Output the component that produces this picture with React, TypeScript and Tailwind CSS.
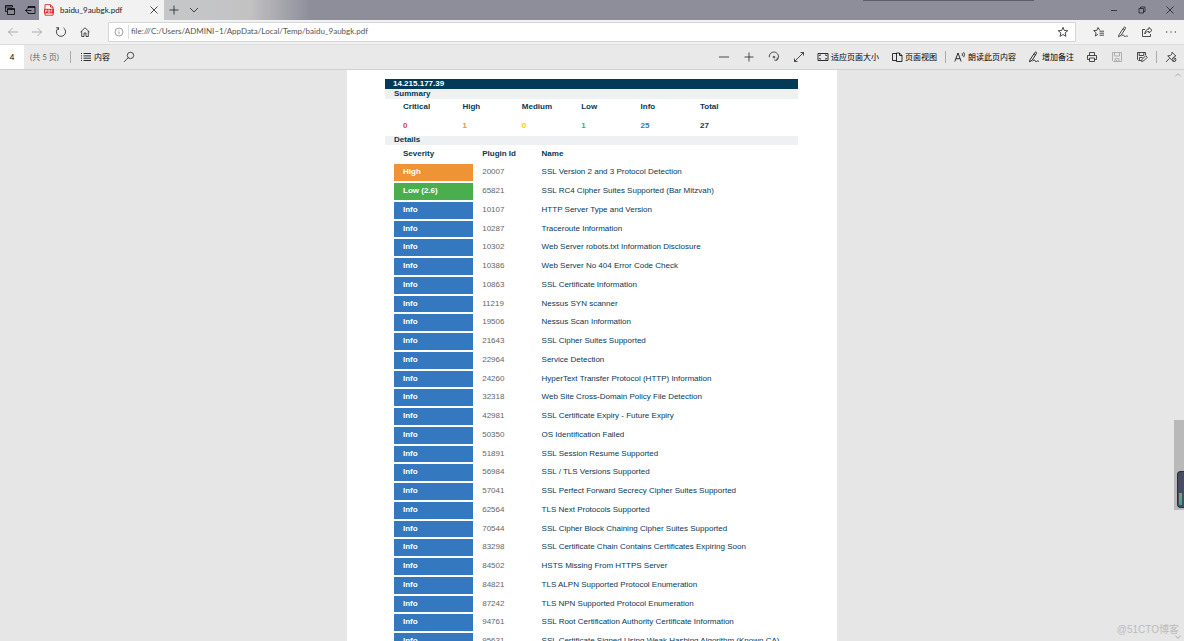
import React from "react";

type Severity = "High" | "Low (2.6)" | "Info";

interface Finding {
  severity: Severity;
  id: string;
  name: string;
}

const severityColors: Record<Severity, string> = {
  High: "bg-[#ee9336]",
  "Low (2.6)": "bg-[#4bae4e]",
  Info: "bg-[#3479bf]",
};

const summary = [
  { label: "Critical", value: 0, color: "text-[#d43f3a]" },
  { label: "High", value: 1, color: "text-[#ee9336]" },
  { label: "Medium", value: 0, color: "text-[#fdc431]" },
  { label: "Low", value: 1, color: "text-[#4bae4e]" },
  { label: "Info", value: 25, color: "text-[#3479bf]" },
  { label: "Total", value: 27, color: "text-[#053958]" },
];

const findings: Finding[] = [
  { severity: "High", id: "20007", name: "SSL Version 2 and 3 Protocol Detection" },
  { severity: "Low (2.6)", id: "65821", name: "SSL RC4 Cipher Suites Supported (Bar Mitzvah)" },
  { severity: "Info", id: "10107", name: "HTTP Server Type and Version" },
  { severity: "Info", id: "10287", name: "Traceroute Information" },
  { severity: "Info", id: "10302", name: "Web Server robots.txt Information Disclosure" },
  { severity: "Info", id: "10386", name: "Web Server No 404 Error Code Check" },
  { severity: "Info", id: "10863", name: "SSL Certificate Information" },
  { severity: "Info", id: "11219", name: "Nessus SYN scanner" },
  { severity: "Info", id: "19506", name: "Nessus Scan Information" },
  { severity: "Info", id: "21643", name: "SSL Cipher Suites Supported" },
  { severity: "Info", id: "22964", name: "Service Detection" },
  { severity: "Info", id: "24260", name: "HyperText Transfer Protocol (HTTP) Information" },
  { severity: "Info", id: "32318", name: "Web Site Cross-Domain Policy File Detection" },
  { severity: "Info", id: "42981", name: "SSL Certificate Expiry - Future Expiry" },
  { severity: "Info", id: "50350", name: "OS Identification Failed" },
  { severity: "Info", id: "51891", name: "SSL Session Resume Supported" },
  { severity: "Info", id: "56984", name: "SSL / TLS Versions Supported" },
  { severity: "Info", id: "57041", name: "SSL Perfect Forward Secrecy Cipher Suites Supported" },
  { severity: "Info", id: "62564", name: "TLS Next Protocols Supported" },
  { severity: "Info", id: "70544", name: "SSL Cipher Block Chaining Cipher Suites Supported" },
  { severity: "Info", id: "83298", name: "SSL Certificate Chain Contains Certificates Expiring Soon" },
  { severity: "Info", id: "84502", name: "HSTS Missing From HTTPS Server" },
  { severity: "Info", id: "84821", name: "TLS ALPN Supported Protocol Enumeration" },
  { severity: "Info", id: "87242", name: "TLS NPN Supported Protocol Enumeration" },
  { severity: "Info", id: "94761", name: "SSL Root Certification Authority Certificate Information" },
  { severity: "Info", id: "95631", name: "SSL Certificate Signed Using Weak Hashing Algorithm (Known CA)" },
];

// All icons are drawn on a 12 x 12 grid
const icons = {
  tabs: (
    <>
      <path d="M3 7.500H1.500v-6h7v1.500M1.500 3h7" />
      <path d="M3.500 4.500h7v6h-7zM3.500 5.500h7" />
    </>
  ),
  setAside: (
    <>
      <path d="M4 4.500V2.500h7v7H4V8M4 3.500h7" />
      <path d="M7.500 6.500h-6M3.500 4.500l-2 2 2 2" />
    </>
  ),
  close: <path d="M2.500 2.500l7 7M9.500 2.500l-7 7" />,
  plus: <path d="M6 1.500v9M1.500 6h9" />,
  minus: <path d="M1 6h10" />,
  chevronDown: <path d="M2 4l4 4 4-4" />,
  chevronUp: <path d="M2 8l4-4 4 4" />,
  minimize: <path d="M3 6.500h6" />,
  restore: <path d="M3 4.500h4.500V9H3zM4.500 4.500V3H9v4.500H7.500" />,
  back: <path d="M11 6H1.500M5.500 2l-4 4 4 4" />,
  forward: <path d="M1 6h9.500M6.500 2l4 4-4 4" />,
  reload: <path d="M3.500 4V1.700H1.200M3.500 1.900A4.600 4.600 0 1 0 8.500 1.900" />,
  home: <path d="M1.500 6L6 1.800 10.500 6M2.700 5v5.500h2.300V7h2v3.500h2.300V5" />,
  info: <path d="M6 2a4 4 0 1 1 0 8 4 4 0 0 1 0-8M6 5.500v2.700M6 3.700v.8" />,
  star: <path d="M6 1.300l1.300 3.200 3.500.2-2.700 2.200.9 3.500L6 8.500l-3 1.900.9-3.500L1.200 4.700l3.500-.2z" />,
  favorites: (
    <>
      <path d="M6.800 4.300L5 1.500 3.900 4.300.7 4.600l2.400 2.200-.8 3.200L5 8.300" />
      <path d="M6.500 5.200h4.500M6.500 7.200h4.500M6.500 9.200h4.500" />
    </>
  ),
  pen: (
    <>
      <path d="M2 8.800L6.800 1.500c1-1 2.200-.2 1.600 1L4.200 9.200 1.500 10.800zM6 2.800l1.600 1" />
      <path d="M4.500 10.300c1.500-2 2.500-1.300 2.700-.4.300 1 1.200.9 1.700.3.500-.5 1-.3 2.100.3" />
    </>
  ),
  share: <path d="M4 3.500H1.500v7h8V8M8 1.500L11 4.300 8 7V5.500C5.800 5.500 4.500 6.300 3.800 8c.2-3 1.700-4.900 4.200-5z" />,
  more: <path d="M1 6h1.200M5.400 6h1.200M9.800 6H11" strokeWidth="1.200" />,
  list: <path d="M1 2.500h1M1 4.900h1M1 7.200h1M1 9.500h1M3.500 2.500H11M3.500 4.900H11M3.500 7.200H11M3.500 9.500H11" />,
  search: <path d="M7.500 1.200a3.200 3.200 0 1 1 0 6.400 3.200 3.200 0 0 1 0-6.400M5.200 6.700L1 10.900" />,
  rotate: (
    <>
      <path d="M1.300 6.200A4.600 4.600 0 1 1 8.800 9.200M9.300 6.700l-.5 2.600-2.500-.2" />
      <path d="M6 5.200a.9.900 0 1 1 0 1.800.9.900 0 0 1 0-1.800" />
    </>
  ),
  expand: <path d="M1.500 10.500l9-9M7.500 1.500h3v3M1.500 7.500v3h3" />,
  fitPage: (
    <>
      <path d="M1 2.500h10v7H1z" />
      <path d="M2.700 5V4H4M8 4h1.300v1M9.300 7v1H8M4 8H2.700V7" />
    </>
  ),
  pageView: <path d="M5.500 9.500h-4v-7h4M5.500 2h3L11 4.500v6H5.500zM8.500 2v2.500H11" />,
  readAloud: <path d="M.8 10.500L4 2l3.200 8.500M2 7.700h4M8 2.200c.6.900.6 2 0 2.900M9.600 1.200c1 1.500 1 3.400 0 4.900" />,
  print: <path d="M3.500 4.500v-3h5v3M3.500 8.500h-2v-4h9v4h-2M3.500 7h5v3.500h-5z" />,
  save: <path d="M1.500 1.500h9v9h-8l-1-1zM3.500 1.500V5h5V1.500M4 10.500V7.700h4v2.800M5.500 9v1.500" />,
  saveAs: (
    <>
      <path d="M5 9.500H2.500l-1-1v-7h8V4M3.200 1.500v3h4.600v-3M3.500 9V6.500h3" />
      <path d="M5.500 10.500l.6-2.200L9.700 4.700l1.600 1.500-3.600 3.700z" />
    </>
  ),
  pin: (
    <>
      <path d="M7 1.200l3.800 3.800-1.200.3-1.400 1.500M7 1.200v1.600L5.400 4.600l-2.700.2 4 4.200M4.500 7.300L1 11" />
      <path d="M9 6.800a1.900 1.900 0 1 1 0 3.800 1.900 1.900 0 0 1 0-3.800M7.700 10l2.600-2.600" />
    </>
  ),
};

const Icon = ({ name, className = "size-3" }: { name: keyof typeof icons; className?: string }) => (
  <svg
    viewBox="0 0 12 12"
    className={`shrink-0 ${className}`}
    fill="none"
    stroke="currentColor"
    strokeWidth="0.800"
    aria-hidden="true"
  >
    {icons[name]}
  </svg>
);

const IconButton = ({
  icon,
  label,
  className = "",
}: {
  icon: keyof typeof icons;
  label: string;
  className?: string;
}) => (
  <button type="button" aria-label={label} className={`flex shrink-0 items-center justify-center ${className}`}>
    <Icon name={icon} />
  </button>
);

const TitleBar = () => (
  <header className="relative flex h-5 shrink-0 bg-linear-to-r from-[#c5c6c8] from-[190px] via-[#c2c2c3] via-[250px] to-[#8e8e9b] to-[310px]">
    <div className="flex w-[39px] items-center justify-between bg-[#8b8a99] pl-1 pr-[3px] text-black">
      <IconButton icon="tabs" label="Tabs" />
      <IconButton icon="setAside" label="Set tabs aside" />
    </div>
    <div className="flex w-[125px] items-center bg-[#f2f2f2] pl-1 pr-1">
      <svg viewBox="0 0 12 12" className="size-3 shrink-0" aria-hidden="true">
        <path d="M2 .7h5.500L10 3.200v8H2z" fill="#fff" stroke="#d22a2a" strokeWidth="0.900" />
        <path d="M7.500 .7v2.500H10" fill="none" stroke="#d22a2a" strokeWidth="0.900" />
        <rect x="1" y="4.800" width="10" height="4.600" fill="#e8282b" />
        <path d="M2.500 8.500V6h1.200v1.300H2.500M5.200 6v2.300h1.200V6zM8 8.500V6h1.500M8 7.300h1.200" fill="none" stroke="#fff" strokeWidth="0.600" />
      </svg>
      <span className="ml-[5px] flex-1 text-[8px]">baidu_9aubgk.pdf</span>
      <IconButton icon="close" label="Close tab" />
    </div>
    <IconButton icon="plus" label="New tab" className="w-5" />
    <IconButton icon="chevronDown" label="Tab previews" className="w-5" />
    <div className="absolute left-[863px] top-0 h-px w-[171px] bg-[#5f5f6b]" />
    <div className="ml-auto flex">
      <IconButton icon="minimize" label="Minimize" className="w-7" />
      <IconButton icon="restore" label="Restore" className="w-7" />
      <IconButton icon="close" label="Close" className="w-7" />
    </div>
  </header>
);

const AddressBar = () => (
  <div className="flex h-[25px] shrink-0 items-center border-b border-[#dcdcdc] bg-[#f2f2f2]">
    <div className="flex w-[108px] pl-px">
      <IconButton icon="back" label="Back" className="w-6 text-[#9b9b9b]" />
      <IconButton icon="forward" label="Forward" className="w-6 text-[#9b9b9b]" />
      <IconButton icon="reload" label="Refresh" className="w-6" />
      <IconButton icon="home" label="Home" className="w-6" />
    </div>
    <div className="flex h-5 flex-1 items-center border border-[#d5d5d5] bg-white pl-1 pr-[6px]">
      <Icon name="info" className="size-3 text-[#888888]" />
      <div className="ml-[3px] h-[14px] w-px bg-[#dddddd]" />
      <input
        type="text"
        aria-label="Address"
        defaultValue="file:///C:/Users/ADMINI~1/AppData/Local/Temp/baidu_9aubgk.pdf"
        className="mx-[2px] mb-[2px] h-4 flex-1 bg-transparent text-[8px] text-[#555555] outline-none"
      />
      <IconButton icon="star" label="Add to favorites" />
    </div>
    <div className="flex pl-[11px] pr-px">
      <IconButton icon="favorites" label="Favorites" className="w-6" />
      <IconButton icon="pen" label="Add notes" className="w-6" />
      <IconButton icon="share" label="Share" className="w-6" />
      <IconButton icon="more" label="More" className="w-6" />
    </div>
  </div>
);

const Divider = () => <div className="h-3 w-px shrink-0 bg-[#aaaaaa]" />;

const TextButton = ({ icon, text }: { icon: keyof typeof icons; text: string }) => (
  <button type="button" className="flex shrink-0 items-center gap-[2px] whitespace-nowrap text-[8px] text-black">
    <Icon name={icon} />
    {text}
  </button>
);

const PdfToolbar = () => (
  <div className="flex h-[25px] shrink-0 items-center border-b border-[#d0d0d0] bg-[#e9e9e9]">
    <input
      type="text"
      aria-label="Page number"
      defaultValue="4"
      className="h-6 w-6 bg-white text-center text-[8px] text-black outline-none"
    />
    <span className="w-[46px] pl-[6px] text-[8px] text-[#666666]">(共 5 页)</span>
    <Divider />
    <div className="flex items-center gap-[13px] pl-[9px]">
      <TextButton icon="list" text="内容" />
      <IconButton icon="search" label="Find" />
    </div>
    <div className="ml-auto flex items-center gap-3 pr-[7px]">
      <div className="flex items-center gap-[13px]">
        <IconButton icon="minus" label="Zoom out" />
        <IconButton icon="plus" label="Zoom in" />
        <IconButton icon="rotate" label="Rotate" />
        <IconButton icon="expand" label="Full screen" />
      </div>
      <TextButton icon="fitPage" text="适应页面大小" />
      <div className="flex items-center gap-2">
        <TextButton icon="pageView" text="页面视图" />
        <Divider />
        <TextButton icon="readAloud" text="朗读此页内容" />
      </div>
      <TextButton icon="pen" text="增加备注" />
      <div className="flex items-center gap-[13px]">
        <IconButton icon="print" label="Print" />
        <IconButton icon="save" label="Save" className="text-[#a0a0a0]" />
        <div className="flex items-center gap-2">
          <IconButton icon="saveAs" label="Save as" />
          <Divider />
          <IconButton icon="pin" label="Unpin toolbar" />
        </div>
      </div>
    </div>
  </div>
);

const Report = () => (
  <article className="mx-auto min-h-full w-full max-w-[490px] bg-white pl-[38px] pr-[39px] pt-[9px] font-['Liberation_Sans',Arial,sans-serif] text-[8px] text-[#053958]">
    <h1 className="h-[10px] bg-[#053958] pl-2 font-bold leading-[10px] text-white">14.215.177.39</h1>
    <h2 className="h-[10px] bg-[#edf1f2] pl-[9px] font-bold leading-[10px]">Summary</h2>
    <div className="pl-[9px] pr-2">
      <table className="w-full table-fixed border-separate border-spacing-0 text-left font-bold leading-[10px]">
        <thead>
          <tr className="h-[18px]">
            {summary.map((item) => (
              <th key={item.label} className="w-[15%] p-0 pb-[3px] pl-[9px]">
                {item.label}
              </th>
            ))}
            <td />
          </tr>
        </thead>
        <tbody>
          <tr className="h-[19px]">
            {summary.map((item) => (
              <td key={item.label} className={`p-0 pb-[2px] pl-[9px] ${item.color}`}>
                {item.value}
              </td>
            ))}
            <td />
          </tr>
        </tbody>
      </table>
    </div>
    <h2 className="h-[9px] bg-[#edf1f2] pl-[9px] font-bold leading-[8px]">Details</h2>
    <div className="pl-[9px] pr-2">
      <table className="w-full table-fixed border-separate border-spacing-0 text-left leading-[10px]">
        <thead>
          <tr className="h-[19px]">
            <th className="w-[20%] p-0 pb-[2px] pl-[9px]">Severity</th>
            <th className="w-[15%] p-0 pb-[2px] pl-[9px]">Plugin Id</th>
            <th className="p-0 pb-[2px] pl-[9px]">Name</th>
          </tr>
        </thead>
        <tbody>
          {findings.map((finding) => (
            <tr key={finding.id} className="h-[19px] nth-[4n]:h-[18px]">
              <td
                className={`border-b-2 border-white bg-clip-padding p-0 pb-px pl-[9px] font-bold text-white ${severityColors[finding.severity]}`}
              >
                {finding.severity}
              </td>
              <td className="p-0 pb-[3px] pl-[9px] text-[#666666]">{finding.id}</td>
              <td className="whitespace-nowrap p-0 pb-[3px] pl-[9px]">{finding.name}</td>
            </tr>
          ))}
        </tbody>
      </table>
    </div>
  </article>
);

const Scrollbar = () => (
  <div className="absolute inset-y-0 right-0 w-[10px]">
    <Icon name="chevronUp" className="mt-px size-2 text-[#777777]" />
    <div className="absolute inset-x-0 top-[350px] h-[90px] bg-[#b9b9b9]" />
    <Icon name="chevronDown" className="absolute bottom-0 left-0 size-2 text-[#777777]" />
    {/* Docked desktop meter */}
    <div className="absolute right-0 top-[401px] h-[37px] w-[7px] rounded-l-sm border border-r-0 border-[#2a2f3e] bg-[#474c60] pl-px pt-[21px]">
      <div className="h-3 w-[3px] bg-linear-to-b from-[#6fae5c] to-[#3f9a94]" />
    </div>
  </div>
);

const App: React.FC = () => {
  return (
    <div className="flex h-screen flex-col overflow-hidden bg-[#e6e6e6] font-['Lato','Noto_Sans_CJK_SC',sans-serif] text-[#222222]">
      <TitleBar />
      <AddressBar />
      <PdfToolbar />
      <main className="relative min-h-0 flex-1 overflow-hidden">
        <Report />
        <Scrollbar />
        <span className="absolute bottom-[3px] right-[5px] font-['Liberation_Sans','Noto_Sans_CJK_SC',sans-serif] text-[10px] leading-4 text-[#bcbcbc]">
          @51CTO博客
        </span>
      </main>
    </div>
  );
};

export default App;
